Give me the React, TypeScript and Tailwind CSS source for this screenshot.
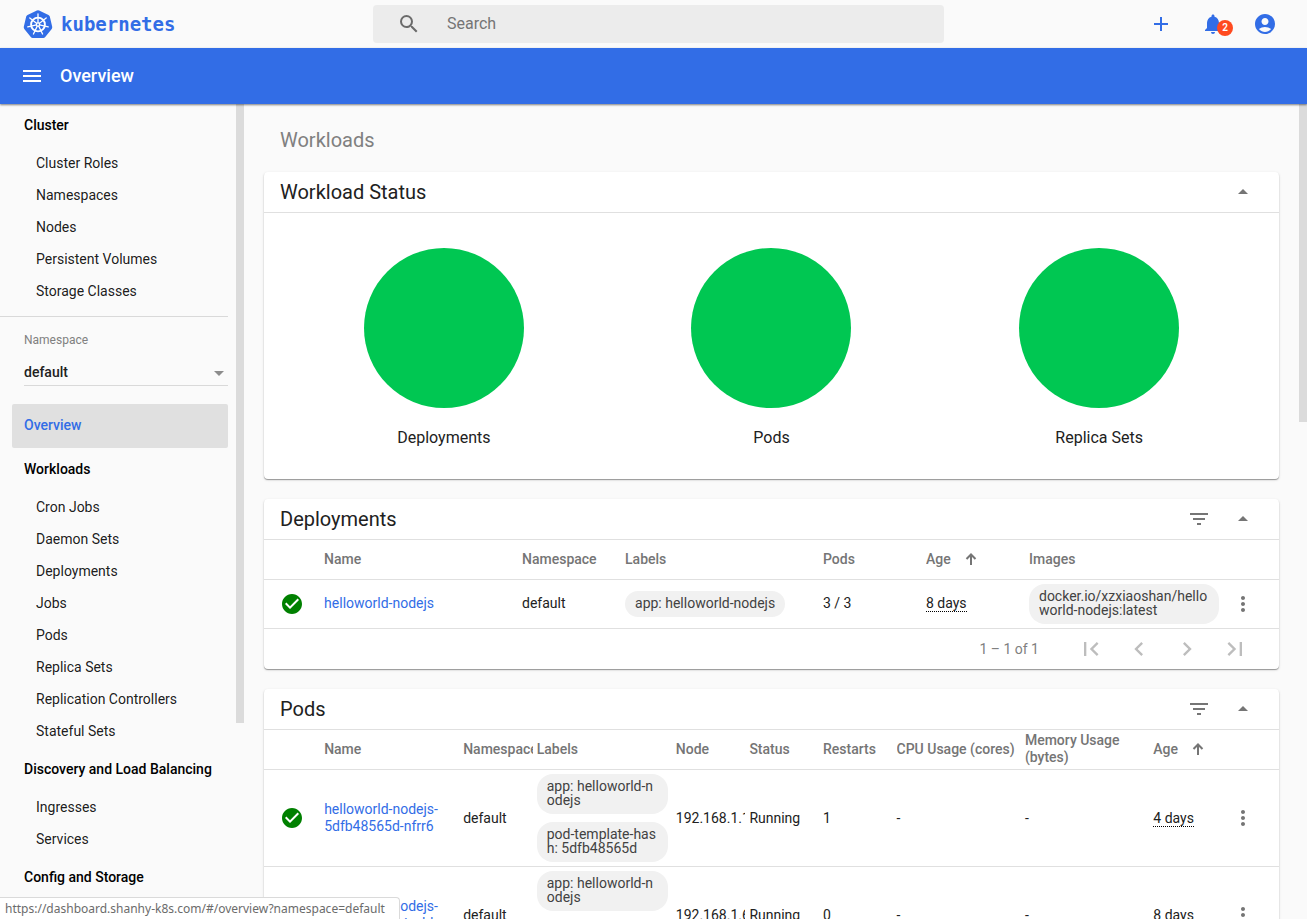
import { useState, type ReactNode } from 'react';
import {
  MdAccountCircle,
  MdAdd,
  MdArrowDropDown,
  MdArrowDropUp,
  MdCheckCircle,
  MdChevronLeft,
  MdChevronRight,
  MdFilterList,
  MdFirstPage,
  MdLastPage,
  MdMenu,
  MdMoreVert,
  MdNotifications,
  MdSearch,
} from 'react-icons/md';
import clsx from 'clsx';

const CLUSTER_ITEMS = ['Cluster Roles', 'Namespaces', 'Nodes', 'Persistent Volumes', 'Storage Classes'];

const NAV_GROUPS = [
  {
    title: 'Workloads',
    items: [
      'Cron Jobs',
      'Daemon Sets',
      'Deployments',
      'Jobs',
      'Pods',
      'Replica Sets',
      'Replication Controllers',
      'Stateful Sets',
    ],
  },
  { title: 'Discovery and Load Balancing', items: ['Ingresses', 'Services'] },
  { title: 'Config and Storage', items: [] },
];

const STATUS = ['Deployments', 'Pods', 'Replica Sets'];

const DEPLOYMENTS = [
  {
    name: 'helloworld-nodejs',
    namespace: 'default',
    labels: ['app: helloworld-nodejs'],
    pods: '3 / 3',
    age: '8 days',
    images: ['docker.io/xzxiaoshan/helloworld-nodejs:latest'],
  },
];

const POD_LABELS = ['app: helloworld-nodejs', 'pod-template-hash: 5dfb48565d'];

const PODS = [
  { name: 'helloworld-nodejs-5dfb48565d-nfrr6', node: '192.168.1.11', restarts: 1, age: '4 days' },
  { name: 'helloworld-nodejs-5dfb48565d-tvxld', node: '192.168.1.6', restarts: 0, age: '8 days' },
];

const SPOKES = [0, 1, 2, 3, 4, 5, 6];

function Logo() {
  return (
    <svg viewBox="0 0 30 30" className="h-[30px] w-[30px] shrink-0" aria-hidden="true">
      <path
        d="M13.9.4a2.5 2.5 0 0 1 2.2 0l9.4 4.5a2.5 2.5 0 0 1 1.3 1.7l2.4 10.2a2.5 2.5 0 0 1-.5 2.1l-6.5 8.1a2.5 2.5 0 0 1-1.9 1H9.7a2.5 2.5 0 0 1-1.9-1l-6.5-8.1a2.5 2.5 0 0 1-.5-2.1L3.2 6.6a2.5 2.5 0 0 1 1.3-1.7z"
        transform="translate(0 1)"
        fill="#326de6"
      />
      <g stroke="#fff" fill="none" strokeLinecap="round">
        <circle cx="15" cy="15.5" r="6.9" strokeWidth="1.9" />
        {SPOKES.map((i) => (
          <path key={i} d="M15 14V5" strokeWidth="1.3" transform={`rotate(${(i * 360) / 7} 15 15.5)`} />
        ))}
      </g>
      <circle cx="15" cy="15.5" r="2.2" fill="#fff" />
      <circle cx="15" cy="15.5" r=".9" fill="#326de6" />
    </svg>
  );
}

function SortArrow() {
  return (
    <svg viewBox="0 0 12 12" className="h-3 w-3" aria-hidden="true">
      <path d="M6 12V1.5M1.5 6 6 1.5 10.5 6" fill="none" stroke="#757575" strokeWidth="2" />
    </svg>
  );
}

function TopBar() {
  return (
    <header className="flex h-12 shrink-0 items-center bg-[#fafafa] text-[#326de6]">
      <a href="#/" className="flex w-[373px] shrink-0 items-center gap-2 pl-[23px]">
        <Logo />
        <span className="font-['DejaVu_Sans_Mono',monospace] text-[19px] leading-6 font-bold">kubernetes</span>
      </a>
      <label className="flex h-[38px] w-[571px] items-center gap-[26px] rounded-sm bg-[#ececec] pl-6">
        <MdSearch className="h-6 w-6 text-[#6b6b6b]" />
        <input
          type="search"
          aria-label="Search"
          placeholder="Search"
          className="min-w-0 flex-1 bg-transparent text-base text-[#212121] outline-none placeholder:text-[#757575]"
        />
      </label>
      <div className="ml-auto flex items-center gap-7 pr-[30px]">
        <button type="button" aria-label="Create new resource">
          <MdAdd className="h-6 w-6" />
        </button>
        <button type="button" aria-label="Notifications" className="relative">
          <MdNotifications className="h-6 w-6" />
          <span className="absolute -right-2 bottom-0 h-4 w-4 rounded-full bg-[#ff4a1f] text-center text-[10px] leading-4 font-semibold text-white">
            2
          </span>
        </button>
        <button type="button" aria-label="User">
          <MdAccountCircle className="h-6 w-6" />
        </button>
      </div>
    </header>
  );
}

function NavHeading({ children }: { children: ReactNode }) {
  return (
    <a href="#/" className="block h-11 pl-6 leading-[42px] font-medium text-black">
      {children}
    </a>
  );
}

function NavItem({ children }: { children: ReactNode }) {
  return (
    <a href="#/" className="block h-8 pl-9 leading-[30px] text-black/90">
      {children}
    </a>
  );
}

function Sidebar() {
  return (
    <aside className="flex w-61 shrink-0 overflow-hidden">
      <nav className="min-w-0 flex-1 overflow-hidden pr-2 text-sm">
        <NavHeading>Cluster</NavHeading>
        {CLUSTER_ITEMS.map((item) => (
          <NavItem key={item}>{item}</NavItem>
        ))}
        <div className="mt-2 border-t border-[#d9d9d9] pt-[13px] pl-6">
          <label htmlFor="namespace" className="block h-5 text-xs leading-5 text-[#808080]">
            Namespace
          </label>
          <div className="mt-2 flex h-7 items-end border-b border-[#d9d9d9]">
            <select
              id="namespace"
              className="h-[26px] min-w-0 flex-1 appearance-none bg-transparent font-medium text-[#212121] outline-none"
            >
              <option>default</option>
              <option>kube-system</option>
            </select>
            <MdArrowDropDown className="-mr-[3px] h-6 w-6 text-[#8c8c8c]" />
          </div>
        </div>
        <a
          href="#/overview"
          className="mt-[18px] ml-3 block h-11 rounded-xs bg-[#e0e0e0] pl-3 leading-[42px] font-medium text-[#326de6]"
        >
          Overview
        </a>
        {NAV_GROUPS.map((group) => (
          <div key={group.title}>
            <NavHeading>{group.title}</NavHeading>
            {group.items.map((item) => (
              <NavItem key={item}>{item}</NavItem>
            ))}
          </div>
        ))}
      </nav>
      <div className="w-2">
        <div className="h-[76%] bg-[#dbdbdb]" />
      </div>
    </aside>
  );
}

function Card({ title, filter, children }: { title: string; filter?: boolean; children: ReactNode }) {
  const [open, setOpen] = useState(true);
  return (
    <section className="rounded bg-white shadow-[0_1px_1px_rgba(0,0,0,0.35),0_1px_3px_rgba(0,0,0,0.12)]">
      <div className="flex h-[41px] items-center border-b border-[#e0e0e0] pr-6 pl-4">
        <h2 className="flex-1 text-xl">{title}</h2>
        <div className="flex items-center gap-5 text-[#757575]">
          {filter && (
            <button type="button" aria-label={`Filter ${title}`}>
              <MdFilterList className="h-6 w-6" />
            </button>
          )}
          <button type="button" aria-label={`Toggle ${title}`} onClick={() => setOpen(!open)}>
            <MdArrowDropUp className={clsx('h-6 w-6', !open && 'rotate-180')} />
          </button>
        </div>
      </div>
      {open && children}
    </section>
  );
}

function Chips({ items }: { items: string[] }) {
  return (
    <div className="flex flex-col items-start gap-2 py-1 pr-2">
      {items.map((item) => (
        <span
          key={item}
          className="max-w-full rounded-2xl bg-[#f1f1f1] px-[10px] pt-[5px] pb-[7px] leading-[14px] break-all text-[#424242]"
        >
          {item}
        </span>
      ))}
    </div>
  );
}

function Th({ className, sorted, children }: { className: string; sorted?: boolean; children?: ReactNode }) {
  return (
    <th scope="col" className={clsx('p-0 pr-1 text-left font-medium text-[#757575]', className)}>
      <div className="flex items-center gap-[14px] overflow-hidden">
        {children}
        {sorted && <SortArrow />}
      </div>
    </th>
  );
}

function Age({ value }: { value: string }) {
  return <span className="border-b border-dotted border-black">{value}</span>;
}

function StatusCell() {
  return (
    <td className="pl-4">
      <MdCheckCircle className="h-6 w-6 text-[#008000]" aria-label="Healthy" />
    </td>
  );
}

function MenuCell() {
  return (
    <td>
      <button type="button" aria-label="Actions" className="ml-1 block text-[#757575]">
        <MdMoreVert className="h-6 w-6" />
      </button>
    </td>
  );
}

function DeploymentsTable() {
  return (
    <>
      <table className="w-full table-fixed border-collapse text-sm leading-[17px]">
        <thead>
          <tr className="h-[39px] border-b border-[#e0e0e0]">
            <Th className="w-15" />
            <Th className="w-[19.5%]">Name</Th>
            <Th className="w-[10.15%]">Namespace</Th>
            <Th className="w-[19.5%]">Labels</Th>
            <Th className="w-[10.15%]">Pods</Th>
            <Th className="w-[10.15%]" sorted>
              Age
            </Th>
            <Th className="w-[19.5%]">Images</Th>
            <Th className="w-13" />
          </tr>
        </thead>
        <tbody>
          {DEPLOYMENTS.map((d) => (
            <tr key={d.name} className="border-b border-[#e0e0e0]">
              <StatusCell />
              <td>
                <a href="#/deployment" className="text-[#326de6]">
                  {d.name}
                </a>
              </td>
              <td>{d.namespace}</td>
              <td>
                <Chips items={d.labels} />
              </td>
              <td>{d.pods}</td>
              <td>
                <Age value={d.age} />
              </td>
              <td>
                <Chips items={d.images} />
              </td>
              <MenuCell />
            </tr>
          ))}
        </tbody>
      </table>
      <div className="flex h-10 items-center justify-end gap-5 pr-[30px] text-sm text-[#bdbdbd]">
        <span className="mr-[18px] text-[#808080]">1 – 1 of 1</span>
        <button type="button" disabled aria-label="First page">
          <MdFirstPage className="h-7 w-7" />
        </button>
        <button type="button" disabled aria-label="Previous page">
          <MdChevronLeft className="h-7 w-7" />
        </button>
        <button type="button" disabled aria-label="Next page">
          <MdChevronRight className="h-7 w-7" />
        </button>
        <button type="button" disabled aria-label="Last page">
          <MdLastPage className="h-7 w-7" />
        </button>
      </div>
    </>
  );
}

function PodsTable() {
  return (
    <table className="w-full table-fixed border-collapse text-sm leading-[17px]">
      <thead>
        <tr className="h-10 border-b border-[#e0e0e0]">
          <Th className="w-15" />
          <Th className="w-[13.7%]">Name</Th>
          <Th className="w-[7.25%]">Namespace</Th>
          <Th className="w-[13.7%]">Labels</Th>
          <Th className="w-[7.25%]">Node</Th>
          <Th className="w-[7.25%]">Status</Th>
          <Th className="w-[7.25%]">Restarts</Th>
          <Th className="w-[12.65%]">CPU Usage (cores)</Th>
          <Th className="w-[12.65%]">Memory Usage (bytes)</Th>
          <Th className="w-[7.25%]" sorted>
            Age
          </Th>
          <Th className="w-13" />
        </tr>
      </thead>
      <tbody>
        {PODS.map((pod) => (
          <tr key={pod.name} className="border-b border-[#e0e0e0]">
            <StatusCell />
            <td className="pr-2">
              <a href="#/pod" className="text-[#326de6]">
                {pod.name}
              </a>
            </td>
            <td>default</td>
            <td>
              <Chips items={POD_LABELS} />
            </td>
            <td className="pr-1">
              <div className="overflow-hidden">{pod.node}</div>
            </td>
            <td>Running</td>
            <td>{pod.restarts}</td>
            <td>-</td>
            <td>-</td>
            <td>
              <Age value={pod.age} />
            </td>
            <MenuCell />
          </tr>
        ))}
      </tbody>
    </table>
  );
}

export default function App() {
  return (
    <div className="flex h-screen flex-col overflow-hidden bg-[#fafafa] font-[Roboto,sans-serif] text-[#212121]">
      <TopBar />
      <div className="z-10 flex h-14 shrink-0 items-center gap-4 bg-[#326de6] pl-5 text-white shadow-[0_1px_2px_rgba(0,0,0,0.5)]">
        <button type="button" aria-label="Toggle navigation">
          <MdMenu className="h-6 w-6" />
        </button>
        <h1 className="text-lg font-medium">Overview</h1>
      </div>
      <div className="flex min-h-0 flex-1">
        <Sidebar />
        <main className="min-w-0 flex-1 overflow-hidden px-5 pt-[22px]">
          <p className="mb-[18px] pl-4 text-xl text-[#808080]">Workloads</p>
          <div className="flex flex-col gap-5">
            <Card title="Workload Status">
              <div className="grid grid-cols-3 px-4 pt-[35px] pb-[29px]">
                {STATUS.map((name) => (
                  <figure key={name} className="flex flex-col items-center gap-[18px]">
                    <svg viewBox="0 0 160 160" className="h-40 w-40" role="img" aria-label={name}>
                      <circle cx="80" cy="80" r="80" fill="#00c752" />
                    </svg>
                    <figcaption className="text-base">{name}</figcaption>
                  </figure>
                ))}
              </div>
            </Card>
            <Card title="Deployments" filter>
              <DeploymentsTable />
            </Card>
            <Card title="Pods" filter>
              <PodsTable />
            </Card>
          </div>
        </main>
        <div className="w-2 shrink-0">
          <div className="h-[39%] bg-[#dbdbdb]" />
        </div>
      </div>
      <div className="absolute bottom-0 left-0 z-20 h-[22px] rounded-tr border-t border-r border-[#dadada] bg-white pr-[14px] pl-[5px] font-['Noto_Sans',sans-serif] text-xs leading-[22px] text-[#6b6b6b]">
        https://dashboard.shanhy-k8s.com/#/overview?namespace=default
      </div>
    </div>
  );
}
